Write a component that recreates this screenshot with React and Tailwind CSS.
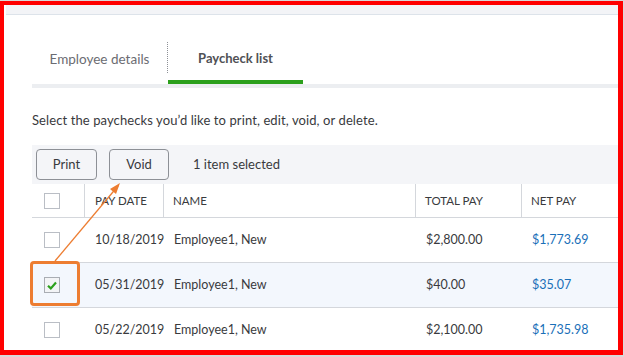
import React from "react";

const rows = [
  { date: "10/18/2019", name: "Employee1, New", total: "$2,800.00", net: "$1,773.69", checked: false },
  { date: "05/31/2019", name: "Employee1, New", total: "$40.00", net: "$35.07", checked: true },
  { date: "05/22/2019", name: "Employee1, New", total: "$2,100.00", net: "$1,735.98", checked: false },
];

const Checkbox = ({ checked }) => (
  <div
    className={`w-[16px] h-[16px] border flex items-center justify-center ${
      checked ? "border-[#a9adb3] bg-[#f3f4f6]" : "border-[#babec5] bg-white"
    }`}
  >
    {checked && (
      <svg width="10" height="9" viewBox="0 0 10 9">
        <path d="M1 4.8 L3.8 7.4 L9 1.6" stroke="#2ca01c" strokeWidth="2.2" fill="none" />
      </svg>
    )}
  </div>
);

const App = () => {
  return (
    <div className="w-[624px] h-[357px] bg-[#d9d9d9] pt-px overflow-hidden font-['Lato',sans-serif] text-[#393a3d]">
      <div className="relative w-[623px] h-[354px] bg-white border-l-[4px] border-t-[4px] border-r-[5px] border-b-[5px] border-[#ff0000] overflow-hidden">
        {/* top band */}
        <div className="ml-[2px] h-[10px] bg-[#f3f4f7] border-b border-[#dde3ea]" />

        {/* tabs */}
        <div className="ml-[28px] mt-[27px] flex">
          <div className="w-[135px] h-[34px] flex items-center justify-center text-[13.5px] text-[#6b6c72]">
            Employee details
          </div>
          <div className="w-0 h-[31px] border-l border-dotted border-[#8d9096]" />
          <div className="w-[135px] flex flex-col">
            <div className="h-[34px] flex items-center justify-center text-[13px] font-bold text-[#505155]">
              Paycheck list
            </div>
            <div className="h-[4px]" />
            <div className="h-[4px] bg-[#2ca01c]" />
          </div>
        </div>
        <div className="ml-[28px] h-[4px] bg-[#eceef1]" />

        <div className="ml-[28px] mt-[23px] text-[13px] leading-[18px] tracking-[0.1px]">
          Select the paychecks you’d like to print, edit, void, or delete.
        </div>

        {/* toolbar */}
        <div className="ml-[28px] mt-[16px] h-[39px] bg-[#f4f5f8] flex items-center pl-[4px] text-[13px]">
          <button className="w-[61px] h-[31px] rounded-[4px] border border-[#8d9096] bg-[#f4f5f8] text-[#393a3d]">
            Print
          </button>
          <button className="ml-[12px] w-[60px] h-[31px] rounded-[4px] border border-[#8d9096] bg-[#f4f5f8] text-[#393a3d]">
            Void
          </button>
          <span className="ml-[24px]">1 item selected</span>
        </div>

        {/* table */}
        <div className="ml-[28px]">
          <div className="grid grid-cols-[53px_79px_252px_106px_1fr] h-[34px] border-b border-[#d4d7dc] text-[11.5px]">
            <div className="flex items-center pl-[12px] border-r border-[#d4d7dc]">
              <Checkbox />
            </div>
            <div className="flex items-center pl-[10px] border-r border-[#d4d7dc]">PAY DATE</div>
            <div className="flex items-center pl-[9px] border-r border-[#d4d7dc]">NAME</div>
            <div className="flex items-center pl-[9px] border-r border-[#d4d7dc]">TOTAL PAY</div>
            <div className="flex items-center pl-[9px]">NET PAY</div>
          </div>
          {rows.map((r) => (
            <div
              key={r.date}
              className={`grid grid-cols-[53px_79px_252px_106px_1fr] h-[45px] border-b border-[#d4d7dc] text-[12.5px] ${
                r.checked ? "bg-[#f3f7fd]" : "bg-white"
              }`}
            >
              <div className="flex items-center pl-[12px]">
                <Checkbox checked={r.checked} />
              </div>
              <div className="flex items-center pl-[10px]">{r.date}</div>
              <div className="flex items-center pl-[10px]">{r.name}</div>
              <div className="flex items-center pl-[10px]">{r.total}</div>
              <div className="flex items-center pl-[10px] text-[#1a6fb8]">{r.net}</div>
            </div>
          ))}
        </div>

        {/* annotation */}
        <div className="absolute left-[26px] top-[256px] w-[50px] h-[45px] border-[3px] border-[#ed7d31] rounded-[4px]" />
        <svg className="absolute left-0 top-0" width="620" height="350">
          <line x1="51" y1="256" x2="114" y2="181" stroke="#ed7d31" strokeWidth="1.3" />
          <path d="M116 178 L106 184 L112 189 Z" fill="#ed7d31" />
        </svg>
      </div>
    </div>
  );
};

export default App;
